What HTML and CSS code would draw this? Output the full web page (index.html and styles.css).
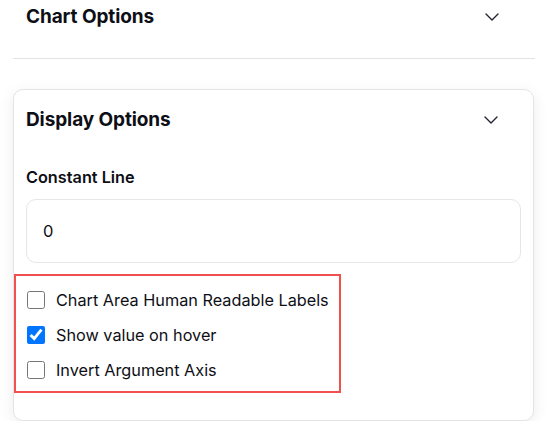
FILE: index.html
```html
<!DOCTYPE html>
<html lang="en">
<head>
<meta charset="utf-8">
<title>Chart Options</title>
<link rel="stylesheet" href="styles.css">
</head>
<body>
<div class="panel">
  <section class="section">
    <div class="section-head">
      <h2 class="title">Chart Options</h2>
      <svg class="chevron" width="14" height="8" viewBox="0 0 14 8" aria-hidden="true"><polyline points="1,1 7,7 13,1" fill="none" stroke="#1f2430" stroke-width="1.4" stroke-linecap="round" stroke-linejoin="round"/></svg>
    </div>
  </section>

  <section class="card">
    <div class="card-head">
      <h2 class="title">Display Options</h2>
      <svg class="chevron" width="14" height="8" viewBox="0 0 14 8" aria-hidden="true"><polyline points="1,1 7,7 13,1" fill="none" stroke="#1f2430" stroke-width="1.4" stroke-linecap="round" stroke-linejoin="round"/></svg>
    </div>

    <div class="field">
      <label class="field-label" for="constant">Constant Line</label>
      <input class="text-input" id="constant" type="text" value="0">
    </div>

    <div class="checks">
      <label class="check-row"><input class="check" type="checkbox"><span>Chart Area Human Readable Labels</span></label>
      <label class="check-row"><input class="check" type="checkbox" checked><span>Show value on hover</span></label>
      <label class="check-row"><input class="check" type="checkbox"><span>Invert Argument Axis</span></label>
    </div>
  </section>
</div>
</body>
</html>
```

FILE: styles.css
```css
* {
  box-sizing: border-box;
}

html, body {
  margin: 0;
  background: #ffffff;
}

body {
  font-family: Inter, "Noto Sans", "Liberation Sans", sans-serif;
  color: #0e0f16;
}

.panel {
  width: 522px;
  margin-left: 13px;
}

.section {
  border-bottom: 1px solid #e3e3e6;
  padding-bottom: 24px;
}

.section-head {
  display: flex;
  align-items: center;
  justify-content: space-between;
  height: 34px;
  padding: 0 36px 0 13px;
}

.title {
  margin: 0;
  font-size: 19px;
  font-weight: 700;
  line-height: 24px;
  letter-spacing: -0.1px;
}

.chevron {
  display: block;
  flex: none;
}

.card {
  margin-top: 30px;
  width: 521px;
  border: 1px solid #e4e4e7;
  border-radius: 10px;
  background: #ffffff;
  box-shadow: 0 4px 16px rgba(0, 0, 0, 0.08);
  padding: 12px 12px 27px;
}

.card-head {
  display: flex;
  align-items: center;
  justify-content: space-between;
  height: 36px;
  padding-right: 23px;
}

.field {
  margin-top: 29px;
  display: flex;
  flex-direction: column;
}

.field-label {
  font-size: 16.25px;
  font-weight: 600;
  line-height: 20px;
  margin-bottom: 12px;
}

.text-input {
  display: block;
  width: 100%;
  height: 64px;
  border: 1px solid #e6e6e9;
  border-radius: 10px;
  padding: 0 16px;
  font-family: Inter, "Noto Sans", "Liberation Sans", sans-serif;
  font-size: 16.5px;
  color: #0e0f16;
  background: #ffffff;
  outline: none;
}

.checks {
  margin-top: 11px;
  margin-left: -12px;
  width: 327px;
  border: 2px solid #f0514f;
  padding: 6px 11px 4px;
  display: flex;
  flex-direction: column;
}

.check-row {
  display: flex;
  align-items: center;
  gap: 11px;
  height: 35px;
  font-size: 16.25px;
  line-height: 20px;
  white-space: nowrap;
}

.check {
  width: 18px;
  height: 18px;
  margin: 0;
  flex: none;
}
```
